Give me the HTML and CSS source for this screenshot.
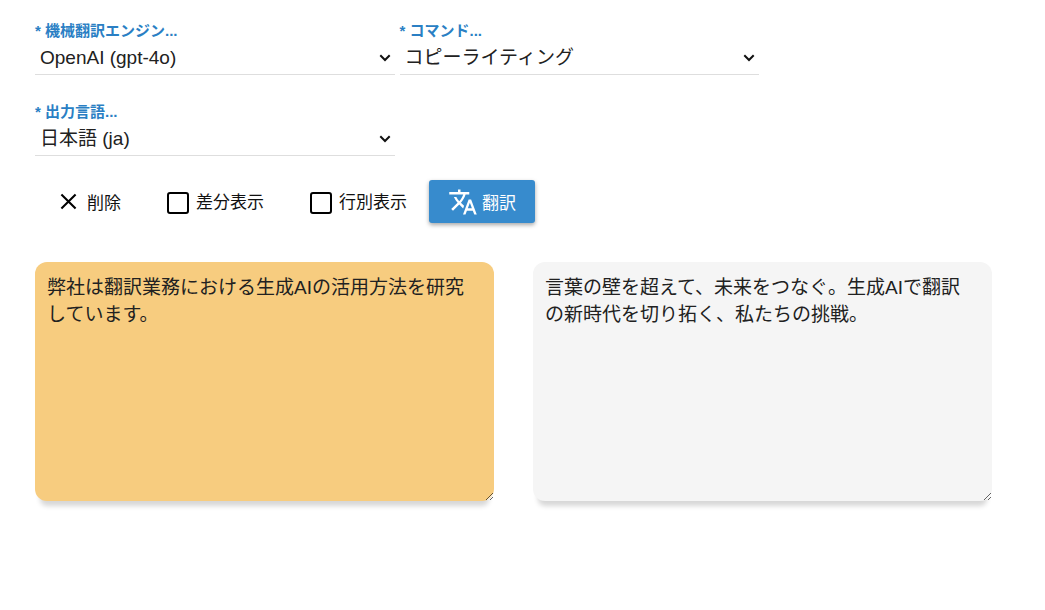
FILE: index.html
```html
<!DOCTYPE html>
<html lang="ja">
<head>
<meta charset="utf-8">
<meta name="viewport" content="width=device-width, initial-scale=1">
<title>翻訳</title>
<link rel="stylesheet" href="styles.css">
</head>
<body>
<main class="page">
  <section class="fields">
    <div class="field">
      <label class="field-label" for="engine">* 機械翻訳エンジン...</label>
      <div class="select-wrap">
        <select class="select" id="engine"><option>OpenAI (gpt-4o)</option></select>
        <svg class="chevron" viewBox="0 0 12 8" aria-hidden="true"><path d="M1.3 1.3 6 6 10.700 1.3"/></svg>
      </div>
    </div>
    <div class="field">
      <label class="field-label" for="command">* コマンド...</label>
      <div class="select-wrap">
        <select class="select" id="command"><option>コピーライティング</option></select>
        <svg class="chevron" viewBox="0 0 12 8" aria-hidden="true"><path d="M1.3 1.3 6 6 10.700 1.3"/></svg>
      </div>
    </div>
    <div class="field">
      <label class="field-label" for="language">* 出力言語...</label>
      <div class="select-wrap">
        <select class="select" id="language"><option>日本語 (ja)</option></select>
        <svg class="chevron" viewBox="0 0 12 8" aria-hidden="true"><path d="M1.3 1.3 6 6 10.700 1.3"/></svg>
      </div>
    </div>
  </section>

  <section class="toolbar">
    <button class="clear" type="button">
      <svg class="clear-icon" viewBox="0 0 18 18" aria-hidden="true"><path d="M1.500 1.500 16.500 16.500M16.500 1.500 1.500 16.500"/></svg>
      <span>削除</span>
    </button>
    <label class="check" for="diff"><input class="check-box" type="checkbox" id="diff"><span>差分表示</span></label>
    <label class="check" for="lines"><input class="check-box" type="checkbox" id="lines"><span>行別表示</span></label>
    <button class="translate" type="button">
      <svg class="translate-icon" viewBox="0 0 24 24" aria-hidden="true"><path d="M12.870 15.070l-2.540-2.510.030-.030c1.740-1.940 2.980-4.170 3.710-6.530H17V4h-7V2H8v2H1v1.990h11.170C11.500 7.920 10.440 9.750 9 11.350 8.070 10.320 7.300 9.190 6.690 8h-2c.730 1.630 1.730 3.170 2.980 4.560l-5.090 5.020L4 19l5-5 3.110 3.110.760-2.040zM18.500 10h-2L12 22h2l1.120-3h4.750L21 22h2l-4.500-12zm-2.620 7l1.620-4.330L19.120 17h-3.240z"/></svg>
      <span>翻訳</span>
    </button>
  </section>

  <section class="editors">
    <textarea class="editor editor-source" aria-label="原文">弊社は翻訳業務における生成AIの活用方法を研究しています。</textarea>
    <textarea class="editor editor-result" aria-label="訳文">言葉の壁を超えて、未来をつなぐ。生成AIで翻訳の新時代を切り拓く、私たちの挑戦。</textarea>
  </section>
</main>
</body>
</html>
```
FILE: styles.css
```css
* {
  box-sizing: border-box;
}

body {
  margin: 0;
  background: #fff;
  color: #212121;
}

body,
button,
select,
textarea {
  font-family: "Liberation Sans", "Noto Sans CJK JP", sans-serif;
}

.page {
  padding: 22px 53px 40px 35px;
}

.fields {
  display: grid;
  grid-template-columns: 1fr 1fr;
  gap: 28px 5px;
  max-width: 724px;
}

.field-label {
  display: block;
  font-size: 15px;
  font-weight: 700;
  line-height: 18px;
  color: #2a7fc4;
}

.select-wrap {
  position: relative;
}

.select {
  display: block;
  width: 100%;
  height: 35px;
  padding: 1px 30px 0 5px;
  border: 0;
  border-bottom: 1px solid #dedede;
  border-radius: 0;
  background: transparent;
  color: inherit;
  font-size: 19px;
  appearance: none;
}

.chevron {
  position: absolute;
  top: 14px;
  right: 4px;
  width: 12px;
  height: 8px;
  fill: none;
  stroke: #111;
  stroke-width: 2;
  pointer-events: none;
}

.toolbar {
  display: flex;
  align-items: center;
  margin: 24px 0 39px 25px;
  font-size: 17px;
  line-height: 24px;
  color: #111;
}

.clear,
.check,
.translate {
  display: flex;
  align-items: center;
}

.clear {
  gap: 10px;
  margin-right: 46px;
  padding: 0;
  border: 0;
  background: none;
  color: inherit;
  font-size: inherit;
}

.clear-icon {
  width: 17px;
  height: 17px;
  fill: none;
  stroke: #000;
  stroke-width: 2.200;
}

.check {
  gap: 7px;
  margin-right: 46px;
  padding-top: 2px;
}

.check-box {
  width: 22px;
  height: 22px;
  margin: 0;
  border: 2px solid #000;
  border-radius: 3px;
  background: #fff;
  appearance: none;
}

.check-box:checked {
  background: #378bcd;
}

.check:last-of-type {
  margin-right: 22px;
}

.translate {
  gap: 4px;
  height: 43px;
  padding: 0 19px;
  border: 0;
  border-radius: 3px;
  background: #378bcd;
  box-shadow: 0 2px 4px rgba(0, 0, 0, 0.35);
  color: #fff;
  font-size: inherit;
}

.translate-icon {
  width: 30px;
  height: 30px;
  fill: currentColor;
}

.editors {
  display: grid;
  grid-template-columns: 1fr 1fr;
  gap: 39px;
}

.editor {
  display: block;
  width: 100%;
  height: 239px;
  padding: 12px 20px 12px 12px;
  border: 0;
  border-radius: 12px;
  box-shadow: 0 10px 5px -5px rgba(0, 0, 0, 0.16);
  color: inherit;
  font-size: 19px;
  line-height: 27px;
  resize: vertical;
}

.editor-source {
  background: #f7cc7f;
}

.editor-result {
  background: #f5f5f5;
}
```
